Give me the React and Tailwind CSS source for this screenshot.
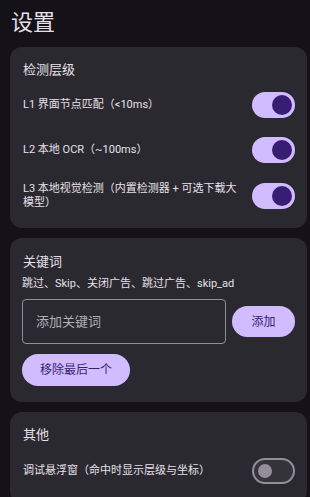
import React, { useState } from 'react';

const font = { fontFamily: 'Roboto, "Noto Sans CJK SC", sans-serif' };

const Switch = ({ on, onChange }) => (
  <button
    type="button"
    onClick={() => onChange(!on)}
    className={
      on
        ? 'flex h-[26px] w-[43px] shrink-0 items-center justify-end rounded-full bg-[#d0bcff] pr-[3px]'
        : 'flex h-[26px] w-[43px] shrink-0 items-center justify-start rounded-full border-2 border-[#938f99] bg-[#36343b] pl-[4px]'
    }
  >
    <span
      className={
        on
          ? 'block h-[20px] w-[20px] rounded-full bg-[#381e72]'
          : 'block h-[14px] w-[14px] rounded-full bg-[#938f99]'
      }
    />
  </button>
);

const Row = ({ label, on, onChange }) => (
  <div className="flex items-center">
    <div className="flex-1 pr-[6px] text-[11px] leading-[13.5px] text-[#e6e0e9]">{label}</div>
    <Switch on={on} onChange={onChange} />
  </div>
);

export default function App() {
  const [l1, setL1] = useState(true);
  const [l2, setL2] = useState(true);
  const [l3, setL3] = useState(true);
  const [debug, setDebug] = useState(false);
  const [keywords, setKeywords] = useState(['跳过', 'Skip', '关闭广告', '跳过广告', 'skip_ad']);
  const [input, setInput] = useState('');

  const addKeyword = () => {
    if (!input.trim()) return;
    setKeywords([...keywords, input.trim()]);
    setInput('');
  };

  return (
    <div className="min-h-[497px] bg-[#141218] pb-4 pl-[10px] pr-[3px]" style={font}>
      <h1 className="pl-[1px] pt-[10px] text-[22px] leading-[26px] text-[#e6e0e9]">设置</h1>

      <div className="mt-[11px] flex flex-col gap-[10px]">
        {/* 检测层级 */}
        <section className="rounded-[12px] bg-[#2b2930] pb-[19px] pl-[13px] pr-[12px] pt-[14px]">
          <h2 className="text-[13px] leading-[18px] text-[#e6e0e9]">检测层级</h2>
          <div className="mt-[13px] flex flex-col gap-[19px]">
            <Row label="L1 界面节点匹配（<10ms）" on={l1} onChange={setL1} />
            <Row label="L2 本地 OCR（~100ms）" on={l2} onChange={setL2} />
            <Row label="L3 本地视觉检测（内置检测器 + 可选下载大模型）" on={l3} onChange={setL3} />
          </div>
        </section>

        {/* 关键词 */}
        <section className="rounded-[12px] bg-[#2b2930] pb-[16px] pl-[12px] pr-[12px] pt-[15px]">
          <h2 className="pl-[1px] text-[13px] leading-[18px] text-[#e6e0e9]">关键词</h2>
          <p className="mt-[6px] text-[11px] leading-[14px] text-[#e6e0e9]">{keywords.join('、')}</p>
          <div className="mt-[8px] flex items-center gap-[6px]">
            <input
              value={input}
              onChange={(e) => setInput(e.target.value)}
              placeholder="添加关键词"
              className="h-[45px] w-[204px] rounded-[4px] border border-[#938f99] bg-transparent px-[13px] text-[13px] text-[#e6e0e9] outline-none placeholder:text-[#b3aeb8]"
            />
            <button
              type="button"
              onClick={addKeyword}
              className="h-[31px] w-[63px] rounded-full bg-[#d0bcff] text-[12px] text-[#381e72]"
            >
              添加
            </button>
          </div>
          <button
            type="button"
            onClick={() => setKeywords(keywords.slice(0, -1))}
            className="mt-[10px] h-[32px] w-[108px] rounded-full bg-[#d0bcff] text-[12px] text-[#381e72]"
          >
            移除最后一个
          </button>
        </section>

        {/* 其他 */}
        <section className="rounded-[12px] bg-[#2b2930] pb-[19px] pl-[13px] pr-[12px] pt-[14px]">
          <h2 className="text-[13px] leading-[18px] text-[#e6e0e9]">其他</h2>
          <div className="mt-[14px] flex flex-col gap-[19px]">
            <Row label="调试悬浮窗（命中时显示层级与坐标）" on={debug} onChange={setDebug} />
          </div>
        </section>
      </div>
    </div>
  );
}
